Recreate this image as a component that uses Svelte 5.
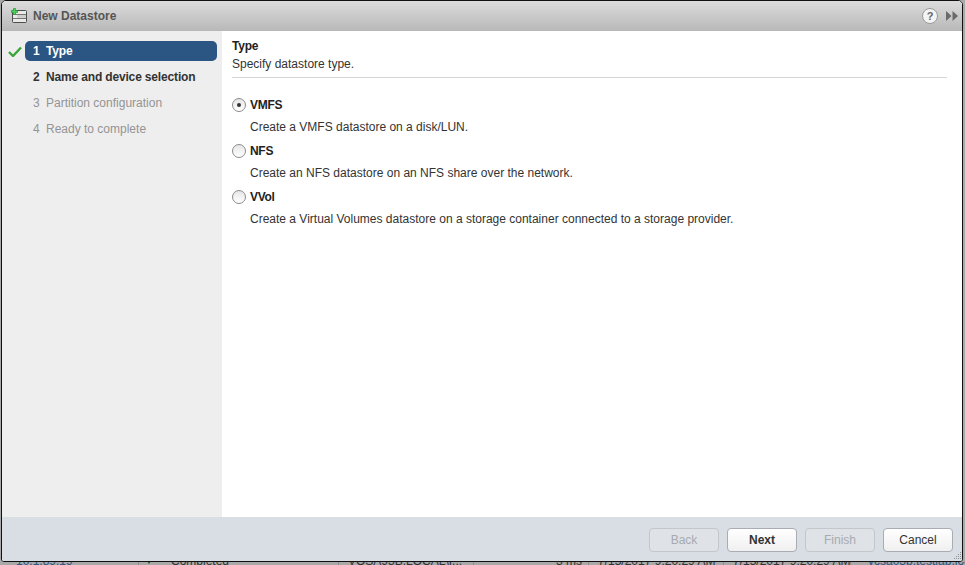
<script lang="ts">
    const steps = [
        { num: 1, label: 'Type', state: 'active' },
        { num: 2, label: 'Name and device selection', state: 'enabled' },
        { num: 3, label: 'Partition configuration', state: 'disabled' },
        { num: 4, label: 'Ready to complete', state: 'disabled' }
    ];

    const options = [
        { name: 'VMFS', desc: 'Create a VMFS datastore on a disk/LUN.', checked: true },
        { name: 'NFS', desc: 'Create an NFS datastore on an NFS share over the network.', checked: false },
        { name: 'VVol', desc: 'Create a Virtual Volumes datastore on a storage container connected to a storage provider.', checked: false }
    ];

    const buttons = [
        { label: 'Back', kind: 'off' },
        { label: 'Next', kind: 'primary' },
        { label: 'Finish', kind: 'off' },
        { label: 'Cancel', kind: '' }
    ];

    // task table that sits behind the modal, only its edge shows
    const columns = [
        { text: '10.1.89.19', w: 138, pad: 16, link: true },
        { text: 'Completed', w: 200, pad: 32, icon: true },
        { text: 'VOSA93B.LOCAL\\I...', w: 135, pad: 9 },
        { text: '3 ms', w: 115, pad: 82 },
        { text: '7/15/2017 9:20:29 AM', w: 135, pad: 9 },
        { text: '7/15/2017 9:20:29 AM', w: 127, pad: 9 },
        { text: 'vcsa03b.testlab.local', w: 115, pad: 17, link: true }
    ];
</script>

<div class="page">
    <div class="dialog">
        <header class="titlebar">
            <svg class="ds-icon" width="16" height="16" viewBox="0 0 16 16">
                <rect x="1.500" y="2.500" width="14" height="12" rx="1" fill="#e9e9e6" stroke="#4d4d4d" />
                <path d="M2 6.500h13M2 10.500h13" stroke="#777" />
                <path d="M6 7h9v3H6z" fill="#cfcfcb" />
                <path d="M2.500 .5h2v2h2v2h-2v2h-2v-2h-2v-2h2z" fill="#4fd05a" stroke="#1f9a2f" stroke-width=".7" />
            </svg>
            <span class="title">New Datastore</span>
            <span class="help">?</span>
            <svg class="forward" width="12" height="10" viewBox="0 0 12 10">
                <path d="M0 0L5.500 5L0 10z M6.500 0L12 5L6.500 10z" fill="#6a6a6a" />
            </svg>
        </header>

        <div class="body">
            <nav class="sidebar">
                {#each steps as step}
                    <div class="step {step.state}">
                        <span class="check">
                            {#if step.state === 'active'}
                                <svg width="14" height="11" viewBox="0 0 14 11">
                                    <path d="M1 6l4 4 8-8.500" fill="none" stroke="#3aa63a" stroke-width="2.400" />
                                </svg>
                            {/if}
                        </span>
                        <div class="pill">
                            <span class="num">{step.num}</span>
                            <span>{step.label}</span>
                        </div>
                    </div>
                {/each}
            </nav>

            <main class="content">
                <div class="heading">
                    <h1>Type</h1>
                    <p>Specify datastore type.</p>
                </div>
                <div class="options">
                    {#each options as opt}
                        <div class="option">
                            <div class="opt-row">
                                <span class="radio" class:checked={opt.checked}></span>
                                <span class="opt-name">{opt.name}</span>
                            </div>
                            <p class="opt-desc">{opt.desc}</p>
                        </div>
                    {/each}
                </div>
            </main>
        </div>

        <footer class="footer">
            {#each buttons as b}
                <button class="btn {b.kind}">{b.label}</button>
            {/each}
            <svg class="grip" width="10" height="10" viewBox="0 0 10 10">
                <path d="M8 1h1v1H8zM6 3h1v1H6zM8 3h1v1H8zM4 5h1v1H4zM6 5h1v1H6zM8 5h1v1H8zM2 7h1v1H2zM4 7h1v1H4zM6 7h1v1H6zM8 7h1v1H8z" fill="#8a8f96" />
            </svg>
        </footer>
    </div>

    <div class="behind">
        {#each columns as col}
            <div class="cell" class:link={col.link} style="width: {col.w}px; padding-left: {col.pad}px">
                {#if col.icon}
                    <svg class="tick" width="8" height="8" viewBox="0 0 8 8">
                        <path d="M0 0h8L4 6z" fill="#1f6a1f" />
                    </svg>
                {/if}
                {col.text}
            </div>
        {/each}
    </div>
</div>

<style>
    :global(body) {
        margin: 0;
    }

    .page {
        width: 965px;
        height: 565px;
        overflow: hidden;
        background: #a9a9a9;
        font-family: "Liberation Sans", Arial, sans-serif;
        font-size: 12px;
        color: #333;
        display: flex;
        flex-direction: column;
    }

    .dialog {
        box-sizing: border-box;
        margin-left: 1px;
        width: 962px;
        height: 562px;
        flex: none;
        display: flex;
        flex-direction: column;
        border: 1px solid #111;
        border-radius: 5px 5px 3px 3px;
        overflow: hidden;
        background: #fff;
    }

    .titlebar {
        height: 30px;
        flex: none;
        box-sizing: border-box;
        display: flex;
        align-items: center;
        padding: 0 4px 0 9px;
        background: linear-gradient(#dcdcdc, #b8b8b8);
    }

    .ds-icon {
        flex: none;
    }

    .title {
        margin-left: 6px;
        font-weight: bold;
        color: #555;
        flex: 1;
    }

    .help {
        box-sizing: border-box;
        width: 16px;
        height: 16px;
        border-radius: 50%;
        border: 1px solid #999;
        background: #f4f4f4;
        color: #666;
        font-weight: bold;
        font-size: 11px;
        line-height: 14px;
        text-align: center;
    }

    .forward {
        margin-left: 8px;
    }

    .body {
        flex: 1;
        display: flex;
        min-height: 0;
    }

    .sidebar {
        width: 220px;
        flex: none;
        box-sizing: border-box;
        background: #eee;
        padding: 10px 5px 0 6px;
        display: flex;
        flex-direction: column;
        gap: 6px;
    }

    .step {
        display: flex;
        align-items: center;
        height: 20px;
        font-weight: bold;
    }

    .check {
        width: 17px;
        flex: none;
        display: flex;
        align-items: center;
    }

    .pill {
        flex: 1;
        height: 20px;
        line-height: 20px;
        padding-left: 8px;
        border-radius: 5px;
        display: flex;
        letter-spacing: -0.16px;
    }

    .num {
        width: 13px;
        flex: none;
    }

    .step.active .pill {
        background: #2b5582;
        color: #fff;
    }

    .step.enabled .pill {
        color: #333;
    }

    .step.disabled .pill {
        color: #949494;
        font-weight: normal;
        letter-spacing: 0;
    }

    .content {
        flex: 1;
        padding: 8px 15px 0 10px;
    }

    .heading {
        height: 38px;
        border-bottom: 1px solid #d5d5d5;
    }

    h1 {
        margin: 0;
        font-size: 12px;
        line-height: 14px;
        font-weight: bold;
        letter-spacing: -0.2px;
        color: #222;
    }

    .heading p {
        margin: 4px 0 0;
        line-height: 14px;
    }

    .options {
        padding-top: 19px;
    }

    .option {
        height: 46px;
    }

    .opt-row {
        display: flex;
        align-items: center;
        height: 16px;
    }

    .radio {
        box-sizing: border-box;
        width: 14px;
        height: 14px;
        border-radius: 50%;
        border: 1px solid #8c8c8c;
        background: linear-gradient(#e6e6e6, #fff);
        margin-right: 4px;
        display: flex;
        align-items: center;
        justify-content: center;
    }

    .radio.checked::after {
        content: '';
        width: 4px;
        height: 4px;
        border-radius: 50%;
        background: #333;
    }

    .opt-name {
        font-weight: bold;
        letter-spacing: -0.3px;
        color: #222;
    }

    .opt-desc {
        margin: 7px 0 0 18px;
        line-height: 14px;
    }

    .footer {
        position: relative;
        height: 44px;
        flex: none;
        box-sizing: border-box;
        background: #d9dde4;
        display: flex;
        align-items: center;
        justify-content: flex-end;
        gap: 8px;
        padding: 2px 9px 0 0;
    }

    .btn {
        box-sizing: border-box;
        width: 70px;
        height: 24px;
        padding: 0;
        font: 12px "Liberation Sans", Arial, sans-serif;
        color: #333;
        border: 1px solid #a9adb3;
        border-radius: 4px;
        background: linear-gradient(#fff, #f0f0f0);
    }

    .btn.primary {
        font-weight: bold;
    }

    .btn.off {
        color: #a6abb0;
        background: #dfe2e7;
        border-color: #c3c7cc;
    }

    .grip {
        position: absolute;
        right: 0;
        bottom: 0;
    }

    .behind {
        flex: 1;
        min-height: 0;
        display: flex;
        overflow: hidden;
    }

    .cell {
        box-sizing: border-box;
        flex: none;
        height: 16px;
        margin-top: -9px;
        line-height: 16px;
        white-space: nowrap;
        border-left: 1px solid #8e8e8e;
        color: #333;
        position: relative;
    }

    .cell:first-child {
        border-left: 0;
    }

    .cell.link {
        color: #2b5582;
    }

    .tick {
        position: absolute;
        left: 6px;
        top: 5px;
    }
</style>
